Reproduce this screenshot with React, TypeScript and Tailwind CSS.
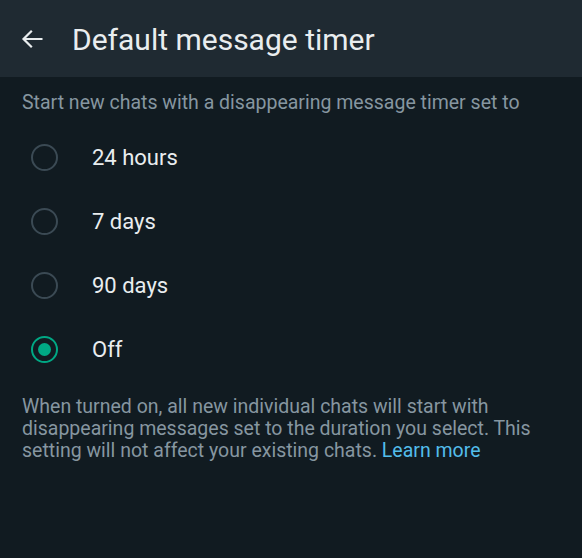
import { useState } from "react";

const options = ["24 hours", "7 days", "90 days", "Off"];

function Radio({ checked }: { checked: boolean }) {
  return (
    <span
      className={
        checked
          ? "flex size-[27px] shrink-0 items-center justify-center rounded-full border-[2.5px] border-[#00a884]"
          : "flex size-[27px] shrink-0 items-center justify-center rounded-full border-[2.5px] border-[#3b4a54]"
      }
    >
      {checked && <span className="size-[13px] rounded-full bg-[#00a884]" />}
    </span>
  );
}

export default function App() {
  const [selected, setSelected] = useState("Off");

  return (
    <div className="flex h-[558px] w-[582px] flex-col bg-[#111b21] font-['Roboto',sans-serif]">
      <header className="flex h-[77px] shrink-0 items-center bg-[#1f2a32] pl-[20px]">
        <svg
          width="24"
          height="24"
          viewBox="0 0 24 24"
          fill="none"
          stroke="#e9edef"
          strokeWidth="2.2"
        >
          <path d="M22.5 12H3.5M11.8 3.7 3.5 12l8.3 8.3" />
        </svg>
        <h1 className="ml-[28px] pt-[2px] text-[30px] leading-none text-[#e9edef]">
          Default message timer
        </h1>
      </header>

      <p className="mt-[16px] pl-[22px] text-[19.5px] leading-none text-[#8696a0]">
        Start new chats with a disappearing message timer set to
      </p>

      <div className="mt-[13px] flex flex-col">
        {options.map((option) => (
          <button
            key={option}
            onClick={() => setSelected(option)}
            className="flex h-[64px] items-center pl-[31px] text-left"
          >
            <Radio checked={selected === option} />
            <span className="ml-[34px] text-[22px] text-[#e9edef]">{option}</span>
          </button>
        ))}
      </div>

      <p className="mt-[14px] px-[22px] text-[19.5px] leading-[22px] text-[#8696a0]">
        When turned on, all new individual chats will start with disappearing
        messages set to the duration you select. This setting will not affect
        your existing chats. <span className="text-[#53bdeb]">Learn more</span>
      </p>
    </div>
  );
}
